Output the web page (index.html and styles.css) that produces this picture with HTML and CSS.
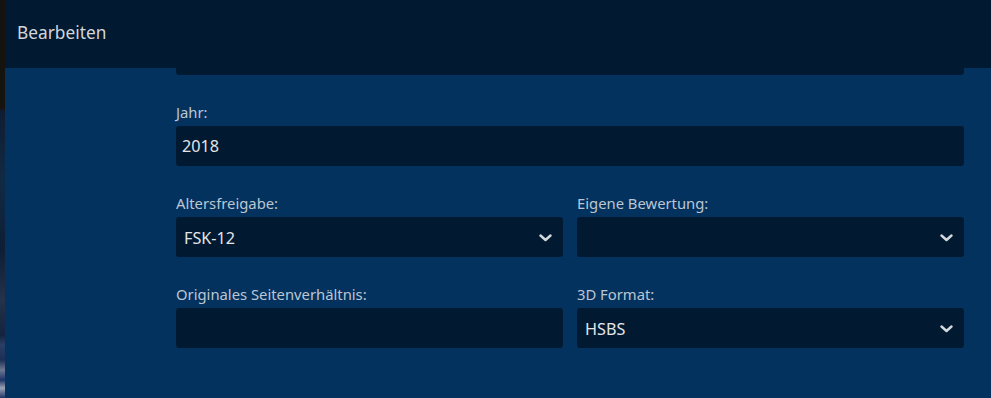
FILE: index.html
```html
<!DOCTYPE html>
<html lang="de">
<head>
<meta charset="utf-8">
<title>Bearbeiten</title>
<link rel="stylesheet" href="styles.css">
</head>
<body>
<div class="backdrop"></div>
<div class="dialog">
  <header class="dialog-header">
    <h2 class="dialog-title">Bearbeiten</h2>
  </header>
  <div class="dialog-content">
    <form class="form">
      <div class="field">
        <div class="input"></div>
      </div>
      <div class="field">
        <label class="label">Jahr:</label>
        <div class="input">2018</div>
      </div>
      <div class="row">
        <div class="field">
          <label class="label">Altersfreigabe:</label>
          <div class="input select"><span>FSK-12</span><svg class="chevron" viewBox="0 0 13 8" width="13" height="8"><path d="M1.5 1.5 L6.5 6 L11.5 1.5" fill="none" stroke="#d4d8dd" stroke-width="2.4" stroke-linecap="round" stroke-linejoin="round"/></svg></div>
        </div>
        <div class="field">
          <label class="label">Eigene Bewertung:</label>
          <div class="input select"><span></span><svg class="chevron" viewBox="0 0 13 8" width="13" height="8"><path d="M1.5 1.5 L6.5 6 L11.5 1.5" fill="none" stroke="#d4d8dd" stroke-width="2.4" stroke-linecap="round" stroke-linejoin="round"/></svg></div>
        </div>
      </div>
      <div class="row">
        <div class="field">
          <label class="label">Originales Seitenverhältnis:</label>
          <div class="input"></div>
        </div>
        <div class="field">
          <label class="label">3D Format:</label>
          <div class="input select"><span>HSBS</span><svg class="chevron" viewBox="0 0 13 8" width="13" height="8"><path d="M1.5 1.5 L6.5 6 L11.5 1.5" fill="none" stroke="#d4d8dd" stroke-width="2.4" stroke-linecap="round" stroke-linejoin="round"/></svg></div>
        </div>
      </div>
    </form>
  </div>
</div>
</body>
</html>
```

FILE: styles.css
```css
* { box-sizing: border-box; }

html, body {
  margin: 0;
  height: 398px;
  overflow: hidden;
}

body {
  display: flex;
  font-family: "Noto Sans", "Open Sans", sans-serif;
  background: #000;
}

.backdrop {
  width: 5px;
  flex: none;
  background:
    linear-gradient(180deg, #15130f 0px, #17140f 108px, #0f1d33 112px, #112a44 180px, #0d1e36 250px, #24324a 300px, #13233f 335px, #2a3e66 345px, #1c2e55 360px, #6d7890 370px, #1d3468 380px, #9aa3b4 388px, #1e3266 398px);
}

.dialog {
  flex: 1;
  position: relative;
  background: #03325f;
  overflow: hidden;
}

.dialog-header {
  position: absolute;
  top: 0;
  left: 0;
  right: 0;
  height: 68px;
  background: #011a31;
  display: flex;
  align-items: center;
  padding: 0 0 4px 12px;
  z-index: 2;
}

.dialog-title {
  margin: 0;
  font-size: 17.3px;
  font-weight: 400;
  color: #d2d6db;
}

.dialog-content {
  padding: 35px 27px 0 171px;
}

.form {
  display: flex;
  flex-direction: column;
}

.row {
  display: grid;
  grid-template-columns: 1fr 1fr;
  column-gap: 14px;
}

.field {
  display: flex;
  flex-direction: column;
  margin-bottom: 27px;
}

.label {
  font-size: 14.8px;
  line-height: 20px;
  color: #bcc6d2;
  margin-bottom: 4px;
}

.input {
  height: 40px;
  background: #011a31;
  border-radius: 3px;
  padding: 0 6px;
  display: flex;
  align-items: center;
  font-size: 16.2px;
  color: #e2e5e8;
}

.select {
  justify-content: space-between;
  padding: 1px 11px 0 8px;
}

.chevron {
  display: block;
  flex: none;
}
```
